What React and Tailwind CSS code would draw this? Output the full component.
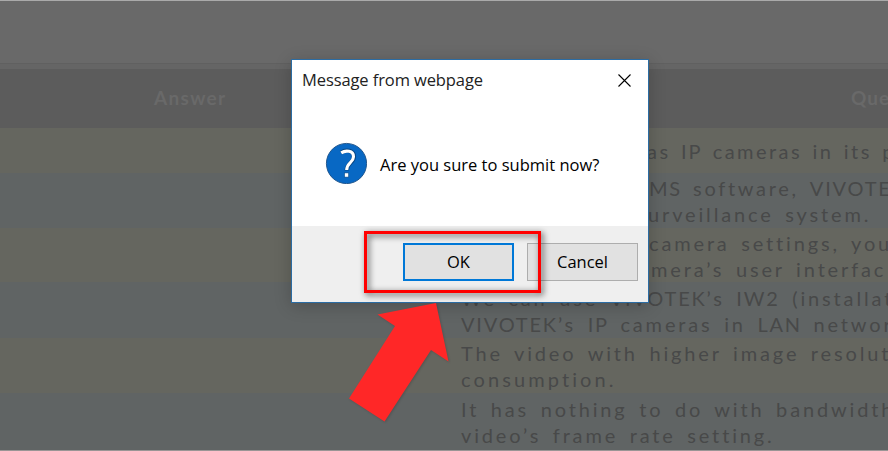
const rows = [
  { tone: 'h-[45px] bg-[#65665f]', lines: [{ text: 'as IP cameras in its p', indent: 'pl-[186px]', spacing: 'tracking-[2.45px] [word-spacing:2.9px]' }] },
  {
    tone: 'h-[55px] bg-[#606464]',
    lines: [
      { text: 'MS software, VIVOTE', indent: 'pl-[188px]', spacing: 'tracking-[2.7px] [word-spacing:3.2px]' },
      { text: 'urveillance system.', indent: 'pl-[187px]' },
    ],
  },
  {
    tone: 'h-[54px] pt-0.5 bg-[#65665f]',
    lines: [
      { text: 'camera settings, you', indent: 'pl-[188px]' },
      { text: 'mera’s user interfac', indent: 'pl-[190px]' },
    ],
  },
  {
    tone: 'h-[56px] pt-0.5 bg-[#606464]',
    lines: [
      { text: 'We can use VIVOTEK’s IW2 (installat', indent: 'pl-0' },
      { text: 'VIVOTEK’s IP cameras in LAN networ', indent: 'pl-0' },
    ],
  },
  {
    tone: 'h-[55px] bg-[#65665f]',
    lines: [
      { text: 'The video with higher image resolut', indent: 'pl-0' },
      { text: 'consumption.', indent: 'pl-0', spacing: 'tracking-[3.1px]' },
    ],
  },
  {
    tone: 'h-[57px] bg-[#606464]',
    lines: [
      { text: 'It has nothing to do with bandwidth', indent: 'pl-0' },
      { text: 'video’s frame rate setting.', indent: 'pl-0' },
    ],
  },
];

// Acronyms are set a little tighter than running text.
function Line({ text, indent, spacing = 'tracking-[2.85px] [word-spacing:3.6px]' }) {
  return (
    <div className={`whitespace-pre ${spacing} ${indent}`}>
      {text.split(/([A-Z]{2,})/).map((part, i) =>
        i % 2 ? <span key={i} className="tracking-[1.8px]">{part}</span> : part
      )}
    </div>
  );
}

function Page() {
  return (
    <div className="flex h-full w-full flex-col border-t border-[#aaaaaa] bg-[#696969] font-['Lato',sans-serif]">
      <div className="h-[62px] shrink-0" />
      <div className="h-1.5 shrink-0 border-t border-[#606060] bg-[#656565]" />
      <div className="flex h-[59px] shrink-0 items-center bg-[#5c5c5c] text-[19px] font-bold text-[#696969]">
        <div className="w-[851px] shrink-0 pl-[154px] tracking-[1.3px]">Answer</div>
        <div className="shrink-0 tracking-[1px]">Que</div>
      </div>
      {rows.map((row, i) => (
        <div key={i} className={`flex shrink-0 flex-col justify-center pl-[461px] text-[20px] leading-[26px] text-[#484949] ${row.tone}`}>
          {row.lines.map((line) => (
            <Line key={line.text} {...line} />
          ))}
        </div>
      ))}
      <div className="h-px shrink-0 bg-[#999595]" />
    </div>
  );
}

function Dialog() {
  return (
    <div className="absolute top-[59px] left-[291px] flex h-[244px] w-[358px] flex-col border border-[#2b6ca3] bg-white font-['Open_Sans',sans-serif] text-[16.5px] text-black shadow-[0_3px_16px_rgba(0,0,0,0.2)]">
      <div className="flex h-10 items-center justify-between pr-[17px] pl-2.5">
        <span className="tracking-[-0.1px] text-[#222222]">Message from webpage</span>
        <svg width="13" height="13" viewBox="0 0 13 13" stroke="#000" strokeWidth="1.1">
          <path d="M.5.5l12 12M12.5.5l-12 12" />
        </svg>
      </div>
      <div className="flex flex-1 items-start pt-[42px] pl-[33px]">
        <svg width="42" height="42" viewBox="-.5 -.5 42 42" fill="none">
          <circle cx="21" cy="21" r="20.1" fill="#0868c4" stroke="#1b4f86" strokeWidth=".9" />
          <path d="M15.5 10.2C20 7 28.4 7.4 28.4 14.2C28.4 20.4 21.2 20.2 21.2 27.9" stroke="#084785" strokeWidth="4.3" />
          <path d="M15.7 10.4C20 7.6 28 7.8 28 14.2C28 20 21.2 20.2 21.2 27.5" stroke="#fff" strokeWidth="3.1" />
          <rect x="19" y="30.4" width="4.2" height="4.2" fill="#fff" stroke="#084785" strokeWidth=".6" />
        </svg>
        <span className="mt-[11px] ml-[13px]">Are you sure to submit now?</span>
      </div>
      <div className="flex h-[76px] gap-[13px] bg-[#efefef] pt-[17px] pl-[111px]">
        <button className="h-[38px] w-[111px] border-2 border-[#0078d7] bg-[#e1e1e1]">OK</button>
        <button className="h-[38px] w-[111px] border border-[#adadad] bg-[#e1e1e1]">Cancel</button>
      </div>
    </div>
  );
}

export default function App() {
  return (
    <div className="relative h-[451px] w-[888px] overflow-hidden">
      <Page />
      <Dialog />
      <div className="absolute top-[231px] left-[364px] h-[62px] w-[177px] border-[3px] border-[#ff0000] [filter:drop-shadow(2px_2px_3px_rgba(0,0,0,0.7))]" />
      <svg className="absolute top-[295px] left-[340px] [filter:drop-shadow(1px_1px_1px_rgba(0,0,0,0.15))]" width="120" height="135" viewBox="340 295 120 135">
        <path d="M436 303L448.5 361.5L431 350L384.5 421.5L349 398.5L395 326L377.5 314.5Z" fill="#ff2727" />
      </svg>
    </div>
  );
}
